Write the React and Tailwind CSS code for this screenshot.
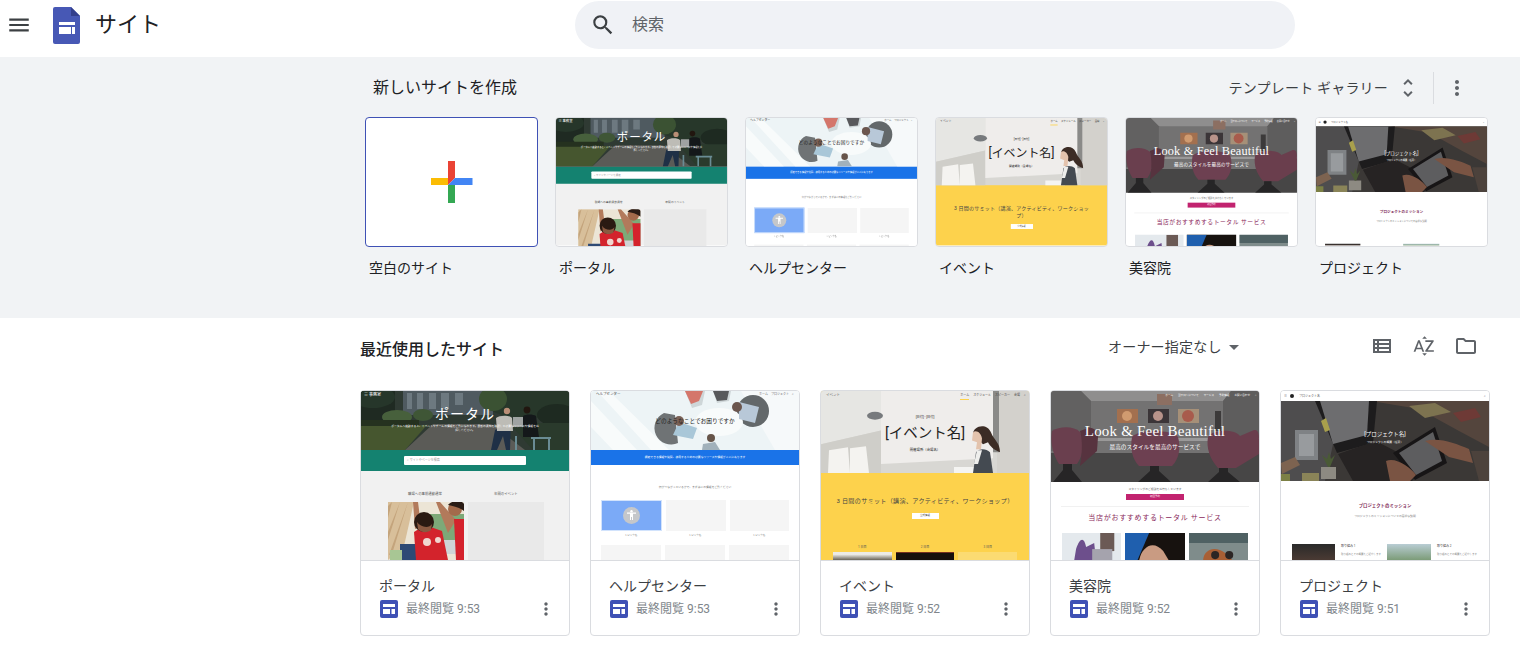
import { MdMenu, MdSearch, MdMoreVert, MdUnfoldMore, MdArrowDropDown, MdOutlineViewList, MdSortByAlpha, MdOutlineFolder } from 'react-icons/md'

const templates = [
  { kind: 'portal', label: 'ポータル' },
  { kind: 'help', label: 'ヘルプセンター' },
  { kind: 'event', label: 'イベント' },
  { kind: 'beauty', label: '美容院' },
  { kind: 'project', label: 'プロジェクト' },
]

const recent = [
  { kind: 'portal', title: 'ポータル', time: '最終閲覧 9:53' },
  { kind: 'help', title: 'ヘルプセンター', time: '最終閲覧 9:53' },
  { kind: 'event', title: 'イベント', time: '最終閲覧 9:52' },
  { kind: 'beauty', title: '美容院', time: '最終閲覧 9:52' },
  { kind: 'project', title: 'プロジェクト', time: '最終閲覧 9:51' },
]

function SitesLogo() {
  return (
    <svg width="27" height="37" viewBox="0 0 27 37" className="shrink-0">
      <path d="M2 0h16l9 9v26a2 2 0 0 1-2 2H2a2 2 0 0 1-2-2V2a2 2 0 0 1 2-2z" fill="#4758b5" />
      <path d="M18 0l9 9h-9z" fill="#333f8c" />
      <path d="M6 15h16v3H6zM6 20h12v7H6zM19 20h3v7h-3z" fill="#fff" />
    </svg>
  )
}

function PlusIcon() {
  return (
    <svg width="42" height="42" viewBox="0 0 42 42">
      <path d="M17 0h7v17l-7 7z" fill="#ea4335" />
      <path d="M0 17h17v7H0z" fill="#fbbc04" />
      <path d="M24 17h17.500v7H17z" fill="#4285f4" />
      <path d="M17 24h7v18h-7z" fill="#34a853" />
    </svg>
  )
}

function SiteIcon() {
  return (
    <svg width="18" height="18" viewBox="0 0 18 18" className="shrink-0">
      <rect width="18" height="18" rx="2" fill="#3f51b5" />
      <path d="M3 4h12v3H3zM3 9h7v5H3zM11.500 9H15v5h-3.500z" fill="#fff" />
    </svg>
  )
}

function PortalPhoto() {
  return (
    <svg viewBox="0 0 208 59" preserveAspectRatio="none" className="h-full w-full">
      <rect width="208" height="59" fill="#2f3a33" />
      <path d="M42 0h90v24H42z" fill="#4f5a60" />
      <path d="M46 2h5v16h-5zM56 2h6v16h-6zM68 2h7v16h-7zM80 2h8v16h-8zM94 2h8v12h-8z" fill="#6d7980" />
      <path d="M0 0h34v34H0z" fill="#1f2a22" />
      <ellipse cx="12" cy="6" rx="22" ry="11" fill="#26362a" />
      <ellipse cx="36" cy="26" rx="15" ry="7" fill="#47603c" />
      <ellipse cx="62" cy="24" rx="10" ry="6" fill="#3f5636" />
      <ellipse cx="168" cy="10" rx="46" ry="17" fill="#27372a" />
      <ellipse cx="132" cy="8" rx="14" ry="12" fill="#3b5233" />
      <ellipse cx="196" cy="24" rx="20" ry="11" fill="#1e2a21" />
      <path d="M0 34h66L44 59H0z" fill="#46562f" />
      <path d="M0 29h58v6H0z" fill="#25311f" />
      <path d="M44 59L72 33h58l34 26z" fill="#5b5b57" />
      <path d="M148 32h60v27h-36z" fill="#2a3a2c" />
      <path d="M150 30l-1 29h-4l-3-14-6 14h-6l4-20z" fill="#1f3046" />
      <path d="M135 27c4-3 13-3 16 0l1 13h-16z" fill="#bdbcb6" />
      <circle cx="146" cy="20" r="3.200" fill="#b98e76" />
      <path d="M152 26h13v10h-13z" fill="#9fa3a2" />
      <path d="M162 25c3-2 10-2 13 0l3 21h-16z" fill="#14181a" />
      <circle cx="166" cy="19" r="3.400" fill="#21160f" />
      <path d="M170 46h20v2h-20zM172 48h2v11h-2zM187 48h2v11h-2zM154 45h2v14h-2z" fill="#6a8c94" />
    </svg>
  )
}

function KidPhoto() {
  return (
    <svg viewBox="0 0 76 58" preserveAspectRatio="none" className="h-full w-full">
      <rect width="76" height="58" fill="#ece5d6" />
      <path d="M0 0h26L16 44 0 58z" fill="#d8bf9a" />
      <path d="M4 0L0 16V4zM12 0L0 38v-8zM20 0L4 52l-3 1z" fill="#c4a47c" />
      <path d="M40 12h36v38H40z" fill="#7da978" />
      <path d="M44 38h30v14H44z" fill="#cfd4d6" />
      <path d="M12 42h16v16H12z" fill="#2e4a75" />
      <path d="M2 48h12v10H2z" fill="#a8c694" />
      <path d="M26 30l11-7 17 6 6 29H28z" fill="#d3232c" />
      <circle cx="39" cy="40" r="4" fill="#f0d7d0" />
      <circle cx="50" cy="38" r="3" fill="#f0d7d0" />
      <path d="M25 0h5l3 24-6 3zM48 0h4l16 18-8 13z" fill="#b27a5b" />
      <circle cx="36" cy="20" r="10" fill="#2a1a12" />
      <path d="M29 20c3 5 12 7 15 2l-1 6c-3 3-10 3-13-1z" fill="#8a5a41" />
      <path d="M66 17h10v41H68z" fill="#d4222c" />
      <circle cx="67" cy="7" r="7" fill="#a36a4b" />
      <path d="M60 3c4-5 14-5 16-1v7c-5-4-11-5-16-6z" fill="#2a1c16" />
    </svg>
  )
}

function HelpPhoto() {
  return (
    <svg viewBox="0 0 208 59" preserveAspectRatio="none" className="h-full w-full">
      <rect width="208" height="59" fill="#edf4f6" />
      <path d="M0 10L46 59H22L0 36zM18 0l60 59H60L6 0z" fill="#f8fbfb" />
      <path d="M150 0h58v59h-24z" fill="#f6f9fa" />
      <circle cx="162" cy="20" r="16" fill="#63686a" />
      <path d="M73 22a16 16 0 1 0 14 30l-3-28z" fill="#6f7375" />
      <path d="M94 0h20l-3 14-10 3zM122 0h18l-2 10-12 2z" fill="#ced6d8" />
      <path d="M94 0h18l-4 10-8 3z" fill="#d4766b" />
      <path d="M122 0h16l-2 9-10 1z" fill="#58595c" />
      <ellipse cx="128" cy="31" rx="24" ry="14" fill="#f8fbfb" />
      <path d="M148 11l20 5-4 16-16-4z" fill="#b8c8d8" />
      <circle cx="146" cy="16" r="5" fill="#6b564e" />
      <path d="M88 31l18 6-4 11-20-4z" fill="#a9c7d8" />
      <circle cx="88" cy="30" r="5" fill="#7a6156" />
      <path d="M112 53l12-2 5 8h-18z" fill="#a1b1bb" />
      <circle cx="120" cy="47" r="4" fill="#665449" />
    </svg>
  )
}

function EventPhoto() {
  return (
    <svg viewBox="0 0 208 83" preserveAspectRatio="none" className="h-full w-full">
      <rect width="208" height="83" fill="#d8d7d3" />
      <path d="M0 0h60v40L0 54z" fill="#e6e6e3" />
      <path d="M0 54l60-14v43H0z" fill="#cfcec9" />
      <path d="M176 0h32v83h-32z" fill="#d3d1cc" />
      <path d="M60 0h112v68l-112 6z" fill="#efedeb" />
      <path d="M172 0h6v62h-6z" fill="#8a8a88" />
      <ellipse cx="54" cy="25" rx="8" ry="4" fill="#777a7d" />
      <path d="M8 60l19-3 2 26H7zM29 58l16-2 3 27H29z" fill="#f4f3f0" />
      <path d="M133 77h24v6h-24z" fill="#f4f4f2" />
      <path d="M155 62c3-4 10-4 14 0l3 21h-20z" fill="#444a51" />
      <path d="M152 44c0-9 14-12 18-2 3 8 9 10 9 20-6-2-10-6-12-10l-5 2z" fill="#3c2c25" />
      <path d="M152 42c3-3 8 0 9 6l-1 11h-5l1-7-5-2z" fill="#e3c3ad" />
      <path d="M156 60h5l-4 14h-4z" fill="#eeeeec" />
    </svg>
  )
}

function BeautyPhoto() {
  return (
    <svg viewBox="0 0 208 91" preserveAspectRatio="none" className="h-full w-full">
      <rect width="208" height="91" fill="#737272" />
      <path d="M30 0h150l-8 10H40z" fill="#8f8e8e" />
      <path d="M0 0h30l10 10v50H0z" fill="#626161" />
      <path d="M180 0h28v60h-36V10z" fill="#5e5d5d" />
      <path d="M0 62h208v29H0z" fill="#474646" />
      <path d="M40 47h170v3H40z" fill="#9a9999" />
      <path d="M66 18h21v14H66z" fill="#a3704f" /><circle cx="76" cy="25" r="5" fill="#d09b70" />
      <path d="M97 18h21v14H97z" fill="#3b3538" /><circle cx="107" cy="25" r="5" fill="#b8938a" />
      <path d="M127 18h21v14h-21z" fill="#a69078" /><circle cx="137" cy="25" r="6" fill="#a85b4c" />
      <path d="M106 3h15v11h-15z" fill="#8c6f62" />
      <path d="M164 20h6v20h-6z" fill="#3c3a3a" />
      <path d="M1 40c8-5 22-5 28 1 5 12 3 24-3 32H8C2 64-1 52 1 40z" fill="#6a3f4e" />
      <path d="M29 40l8-3c6-1 9 3 10 9l-1 14-17 15c2-12 3-24 0-35z" fill="#57333f" />
      <path d="M81 46c6-8 40-8 46 0 3 11 1 22-6 29H88c-7-7-9-18-7-29z" fill="#6d4051" />
      <path d="M157 46c5-8 27-8 32-1l14-6c5-1 5 6 5 10v14l-23 14h-18c-8-9-12-20-10-31z" fill="#6a3e4d" />
      <path d="M12 73h9v6l10 12H2l10-12zM99 75h9v5l12 11H87l12-11zM168 77h9v4l12 10h-32l11-10z" fill="#262526" />
    </svg>
  )
}

function ProjectPhoto() {
  return (
    <svg viewBox="0 0 208 80" preserveAspectRatio="none" className="h-full w-full">
      <rect width="208" height="80" fill="#3b3836" />
      <path d="M90 0h118v46l-30-16-40-22z" fill="#54453d" />
      <path d="M0 0h38l16 34-10 46H0z" fill="#4e4d4e" />
      <path d="M34 0h62l-4 42-36 10z" fill="#1d1c1d" />
      <path d="M39 0h49l-2 34-34 9z" fill="#6d6d6f" />
      <path d="M57 53l38-13 50 26-14 14H72z" fill="#262323" />
      <path d="M128 5l26-3 16 9-26 6z" fill="#7d7350" />
      <path d="M112 52l42-26 12 36-32 17z" fill="#171516" />
      <path d="M118 52l34-21 9 29-26 14z" fill="#5d5d5f" />
      <path d="M144 40c14-4 30 2 44 8l4 14-24-6zM105 60c10-4 24 6 30 14l-6 6h-20z" fill="#7a5443" />
      <path d="M172 12l22-5 6 9-20 5z" fill="#6e3a36" />
      <path d="M14 29h23v30H14z" fill="#7f8285" />
      <path d="M18 33h15v22H18z" fill="#989b9e" />
      <path d="M40 20l5-3 4 12-5 2z" fill="#a9a04c" />
      <path d="M0 62l14-6 5 8-18 9z" fill="#7d6350" />
      <path d="M0 73h9v7H0z" fill="#7c8045" />
      <path d="M21 72h17v8H21z" fill="#8a8458" />
      <path d="M40 66h15v12H40z" fill="#8d8a82" />
      <path d="M47 66l-6-12 5 4 2-7 2 7 4-4-5 12z" fill="#4a5a36" />
      <path d="M190 50h18v30h-10z" fill="#4c423c" />
    </svg>
  )
}

function Tile({ blue }) {
  return (
    <div className={`flex h-[31px] flex-1 items-center justify-center ${blue ? 'border border-[#d2e3fc] bg-[#7baaf7]' : 'bg-[#f5f5f5]'}`}>
      {blue && (
        <div className="flex h-[17px] w-[17px] items-center justify-center rounded-full bg-[#c5c7ca]">
          <svg width="11" height="11" viewBox="0 0 11 11"><path d="M1 2.500h9v1.200H7v6.300H6V7H5v3H4V3.700H1z" fill="#fff" /><circle cx="5.500" cy="1.300" r="1.200" fill="#fff" /></svg>
        </div>
      )}
    </div>
  )
}

function PortalThumb() {
  return (
    <div className="flex h-full flex-col bg-[#f1f1f1]">
      <div className="relative h-[59px] shrink-0 bg-[#3d4a44]">
        <PortalPhoto />
        <div className="absolute inset-0 flex flex-col items-center text-white">
          <div className="absolute left-[3px] top-[1px] text-[4px]">≡ 事務室</div>
          <div className="mt-[13px] text-[14px] leading-[20px] tracking-[1px]">ポータル</div>
          <div className="w-[150px] text-center text-[2.800px] leading-[4px]">ポータルへ移動すると、イベントやチームの情報をご覧になれます。最新の通知を確認して必要なリソースや情報をお探しください。</div>
        </div>
      </div>
      <div className="flex h-[21px] shrink-0 items-center justify-center bg-[#148270]">
        <div className="flex h-[9px] w-[122px] items-center rounded-[1px] bg-white pl-[3px] text-[3px] text-[#999]">⌕ サイトやページを検索</div>
      </div>
      <div className="flex justify-start pl-[27px] pt-[21px] text-[3.400px] leading-[5px] text-[#555]">
        <div className="w-[80px] pl-[20px]">職場への事前通勤通常</div>
        <div className="pl-[26px]">年間のイベント</div>
      </div>
      <div className="mt-[5px] flex flex-1 gap-[4px] pl-[27px]">
        <div className="h-[58px] w-[76px]"><KidPhoto /></div>
        <div className="h-[58px] w-[76px] bg-[#e9e9e9]" />
      </div>
    </div>
  )
}

function HelpThumb() {
  return (
    <div className="flex h-full flex-col bg-white">
      <div className="relative h-[59px] shrink-0">
        <HelpPhoto />
        <div className="absolute left-[5px] top-[1px] text-[3.500px] text-[#444]">ヘルプセンター</div>
        <div className="absolute right-[5px] top-[1px] text-[3px] text-[#666]">ホーム　プロジェクト　⌕</div>
        <div className="absolute inset-x-0 top-[25px] text-center text-[5.700px] leading-[10px] text-[#222]">どのようなことでお困りですか</div>
      </div>
      <div className="flex h-[15px] shrink-0 items-center justify-center bg-[#1a73e8] text-[2.800px] text-white">検索できる情報や質問、使用するための必要なリソースや情報がここにあります</div>
      <div className="mt-[20px] text-center text-[2.800px] leading-[5px] text-[#777]">何がつながっているかで、まずはこの情報をご覧ください</div>
      <div className="mt-[10px] flex gap-[4px] px-[10px]">
        <Tile blue /><Tile /><Tile />
      </div>
      <div className="mt-[2px] flex gap-[4px] px-[10px] text-center text-[2.500px] leading-[6px] text-[#888]">
        <div className="flex-1">トピック名</div><div className="flex-1">トピック名</div><div className="flex-1">トピック名</div>
      </div>
      <div className="mt-[6px] flex gap-[4px] px-[10px]">
        <Tile /><Tile /><Tile />
      </div>
    </div>
  )
}

function EventThumb({ compact }) {
  return (
    <div className="flex h-full flex-col bg-[#fdd24c]">
      <div className="relative h-[82px] shrink-0">
        <EventPhoto />
        <div className="absolute left-[5px] top-[2px] text-[3.500px] text-[#555]">イベント</div>
        <div className="absolute right-[3px] top-[2px] flex gap-[4px] text-[3px] text-[#444]">
          <span className="border-b border-[#fdd24c] pb-[1px]">ホーム</span><span>スケジュール</span><span>スピーカー</span><span>会場</span><span>⌕</span>
        </div>
        <div className="absolute inset-x-0 top-[24px] flex flex-col items-center text-[#222]">
          <div className="text-[3.200px] leading-[5px]">[日付] - [日付]</div>
          <div className="mt-[3px] text-[14.500px] leading-[21px]">[イベント名]</div>
          <div className="mt-[4px] text-[3.400px] leading-[5px]">開催場所（会場名）</div>
        </div>
      </div>
      <div className={`mx-auto mt-[23px] text-center text-[6.100px] leading-[9px] tracking-[0.300px] text-[#444] ${compact ? 'w-[170px]' : 'whitespace-nowrap'}`}>3 日間のサミット（講演、アクティビティ、ワークショップ）</div>
      <div className={`mx-auto flex h-[6px] w-[27px] shrink-0 items-center justify-center bg-white text-[2.500px] text-[#444] ${compact ? 'mt-[6px]' : 'mt-[8px]'}`}>公式情報</div>
      {!compact && (
        <>
          <div className="mt-[26px] flex gap-[4px] px-[12px] text-center text-[3px] leading-[5px] text-[#555]">
            <div className="flex-1">1 日目</div><div className="flex-1">2 日目</div><div className="flex-1">3 日目</div>
          </div>
          <div className="mt-[2px] flex flex-1 gap-[4px] px-[12px]">
            <div className="flex-1 bg-[linear-gradient(#ecebe6_30%,#6a6458)]" />
            <div className="flex-1 border-t border-[#74301f] bg-[#16100c]" />
            <div className="flex-1 bg-[#fbdb72]" />
          </div>
        </>
      )}
    </div>
  )
}

function BeautyThumb() {
  return (
    <div className="flex h-full flex-col bg-white">
      <div className="relative h-[91px] shrink-0">
        <BeautyPhoto />
        <div className="absolute right-[3px] top-[3px] flex gap-[5px] text-[2.600px] text-white">
          <span>ホーム</span><span>当サロンについて</span><span>サービス</span><span>予約情報</span><span>お問い合わせ</span><span>⌕</span>
        </div>
        <div className="absolute inset-x-0 top-[31px] text-center text-white">
          <div className="font-['Liberation_Serif',serif] text-[15px] leading-[19px] tracking-[0.200px]">Look &amp; Feel Beautiful</div>
          <div className="mt-[2px] text-[5.700px] leading-[8px]">最高のスタイルを最高のサービスで</div>
        </div>
      </div>
      <div className="mt-[5px] text-center text-[2.800px] leading-[5px] text-[#666]">スタイリングのご相談をお待ちしています</div>
      <div className="mx-auto mt-[2px] flex h-[6px] w-[58px] shrink-0 items-center justify-center bg-[#c2236f] text-[2.500px] text-white">初回予約</div>
      <div className="mx-[10px] mt-[6px] border-t border-[#f1f1f1]" />
      <div className="mt-[6px] text-center text-[7px] leading-[10px] tracking-[0.700px] text-[#8b2a5c]">当店がおすすめするトータル サービス</div>
      <div className="mt-[10px] flex flex-1 gap-[4px] px-[11px]">
        <div className="flex-1 bg-[#e4e9ed]">
          <svg viewBox="0 0 59 28" preserveAspectRatio="none" className="h-full w-full">
            <path d="M38 0h14v18H38z" fill="#6b5a55" /><path d="M14 16c4-12 8-12 10-2l8-4 2 18H12z" fill="#6d4f8c" /><path d="M30 16h20v12H30z" fill="#a5a3ad" />
          </svg>
        </div>
        <div className="flex-1 bg-[#17120f]">
          <svg viewBox="0 0 59 28" preserveAspectRatio="none" className="h-full w-full">
            <path d="M0 0h24L12 28H0z" fill="#1f5fae" /><path d="M14 28c2-14 14-22 24-10l6 10z" fill="#c99b82" />
          </svg>
        </div>
        <div className="flex-1 bg-[#7f8c8b]">
          <svg viewBox="0 0 59 28" preserveAspectRatio="none" className="h-full w-full">
            <path d="M0 0h59v10H0z" fill="#4f6163" /><path d="M14 28c0-12 12-16 22-8l8 8z" fill="#a85f35" /><circle cx="26" cy="22" r="4" fill="#2b2524" /><circle cx="40" cy="22" r="4" fill="#2b2524" />
          </svg>
        </div>
      </div>
    </div>
  )
}

function ProjectThumb({ compact }) {
  return (
    <div className="flex h-full flex-col bg-white">
      <div className="flex h-[10px] shrink-0 items-center gap-[3px] px-[3px] text-[3px] text-[#555]">
        <span>≡</span>
        <span className="h-[4px] w-[4px] rounded-full bg-[#222]" />
        <span className="ml-[2px]">プロジェクト名</span>
        <span className="ml-auto">⌕</span>
      </div>
      <div className="relative h-[80px] shrink-0">
        <ProjectPhoto />
        <div className="absolute inset-x-0 top-[29px] text-center text-white">
          <div className="text-[5.500px] leading-[8px]">[プロジェクト名]</div>
          <div className="mt-[2px] text-[2.800px] leading-[4px]">プロジェクトの概要（任意）</div>
        </div>
      </div>
      <div className="mt-[21px] text-center text-[4.400px] font-bold leading-[7px] text-[#7d1f55]">プロジェクトのミッション</div>
      <div className="mt-[5px] text-center text-[2.800px] leading-[4px] text-[#888]">プロジェクトのミッションについての簡単な説明</div>
      <div className="mt-[26px] flex flex-1 pl-[11px]">
        <div className="w-[43px] shrink-0 bg-[linear-gradient(#2a2a2a,#4a3a33)]" />
        <div className="w-[52px] shrink-0 pl-[6px] text-[3px] leading-[5px] text-[#444]">{!compact && <>取り組み 1<div className="mt-[3px] text-[2.500px] text-[#888]">取り組みとその概要をご紹介します</div></>}</div>
        <div className="w-[44px] shrink-0 bg-[linear-gradient(#b9cdd4,#7c9c78)]" />
        <div className="flex-1 pl-[6px] text-[3px] leading-[5px] text-[#444]">{!compact && <>取り組み 2<div className="mt-[3px] text-[2.500px] text-[#888]">取り組みとその概要をご紹介します</div></>}</div>
      </div>
    </div>
  )
}

function Thumb({ kind, compact }) {
  if (kind === 'portal') return <PortalThumb />
  if (kind === 'help') return <HelpThumb />
  if (kind === 'event') return <EventThumb compact={compact} />
  if (kind === 'beauty') return <BeautyThumb />
  return <ProjectThumb compact={compact} />
}

function TemplateCard({ kind, label }) {
  return (
    <div className="w-[173px]">
      <div className="h-[130px] overflow-hidden rounded-[4px] border border-[#dadce0] bg-white">
        <div className="h-[155px] w-[208px] origin-top-left scale-[0.822]">
          <Thumb kind={kind} compact />
        </div>
      </div>
      <div className="mt-[11px] pl-[4px] text-[14px] leading-[20px] text-[#202124]">{label}</div>
    </div>
  )
}

function SiteCard({ kind, title, time }) {
  return (
    <div className="h-[246px] w-[210px] overflow-hidden rounded-[4px] border border-[#dadce0] bg-white">
      <div className="h-[170px] overflow-hidden border-b border-[#dadce0]">
        <Thumb kind={kind} />
      </div>
      <div className="pl-[19px] pr-[13px] pt-[15px]">
        <div className="-ml-[1px] text-[14px] leading-[20px] text-[#3c4043]">{title}</div>
        <div className="mt-[4px] flex h-[18px] items-center">
          <SiteIcon />
          <span className="ml-[8px] text-[12px] text-[#80868b]">{time}</span>
          <MdMoreVert className="ml-auto text-[#5f6368]" size={20} />
        </div>
      </div>
    </div>
  )
}

export default function App() {
  return (
    <div className="h-[648px] overflow-hidden bg-white font-['Roboto','Noto_Sans_CJK_JP',sans-serif]">
      {/* ヘッダー */}
      <header className="flex h-[57px] items-center">
        <MdMenu className="mb-[7px] ml-[6px] text-[#3c4043]" size={26} />
        <div className="mb-[7px] ml-[21px]"><SitesLogo /></div>
        <div className="mb-[7px] ml-[15px] text-[22px] leading-[28px] text-[#202124]">サイト</div>
        <div className="mb-[8px] ml-[414px] flex h-[48px] w-[720px] items-center rounded-[24px] bg-[#f0f2f6] pl-[15px]">
          <MdSearch className="text-[#3c4043]" size={26} />
          <span className="ml-[16px] text-[16px] text-[#5f6368]">検索</span>
        </div>
      </header>

      {/* テンプレート */}
      <section className="h-[261px] bg-[#f1f3f5] pl-[365px]">
        <div className="flex h-[60px] items-center pl-[8px] pr-[51px] pt-[2px]">
          <h2 className="text-[16px] text-[#202124]">新しいサイトを作成</h2>
          <span className="ml-auto text-[14px] tracking-[0.200px] text-[#3c4043]">テンプレート ギャラリー</span>
          <MdUnfoldMore className="ml-[8px] text-[#5f6368]" size={24} />
          <div className="ml-[13px] h-[32px] border-l border-[#dadce0]" />
          <MdMoreVert className="ml-[11px] text-[#5f6368]" size={24} />
        </div>
        <div className="flex gap-[17px]">
          <div className="w-[173px]">
            <div className="flex h-[130px] items-center justify-center rounded-[4px] border border-[#3f51b5] bg-white">
              <PlusIcon />
            </div>
            <div className="mt-[11px] pl-[4px] text-[14px] leading-[20px] text-[#202124]">空白のサイト</div>
          </div>
          {templates.map((t) => <TemplateCard key={t.kind} {...t} />)}
        </div>
      </section>

      {/* 最近使用したサイト */}
      <section className="pl-[360px]">
        <div className="flex h-[72px] w-[1130px] items-center pb-[8px]">
          <h2 className="text-[16px] font-medium text-[#202124]">最近使用したサイト</h2>
          <span className="mb-[6px] ml-[604px] text-[14px] tracking-[0.200px] text-[#3c4043]">オーナー指定なし</span>
          <MdArrowDropDown className="mb-[6px] text-[#5f6368]" size={24} />
          <MdOutlineViewList className="mb-[8px] ml-[124px] text-[#5f6368]" size={24} />
          <MdSortByAlpha className="mb-[8px] ml-[18px] text-[#5f6368]" size={24} />
          <MdOutlineFolder className="mb-[8px] ml-[18px] text-[#5f6368]" size={24} />
        </div>
        <div className="flex gap-[20px]">
          {recent.map((s) => <SiteCard key={s.kind} {...s} />)}
        </div>
      </section>
    </div>
  )
}
